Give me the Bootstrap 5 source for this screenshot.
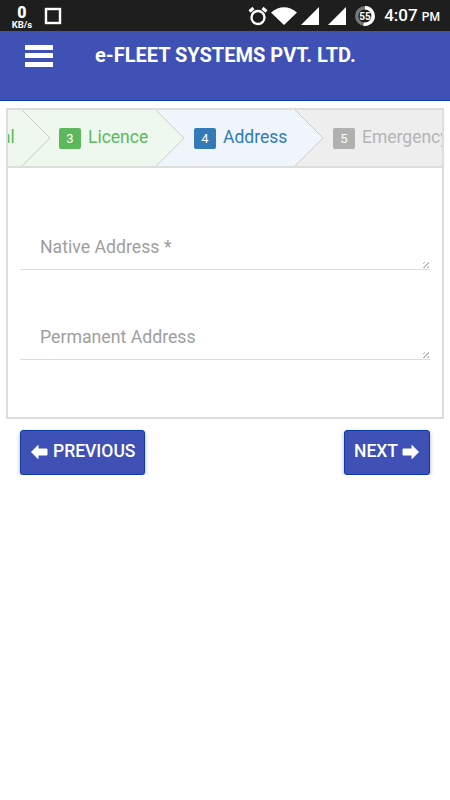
<!DOCTYPE html>
<html lang="en">
<head>
    <meta charset="UTF-8">
    <meta name="viewport" content="width=device-width, initial-scale=1.0">
    <title>e-FLEET SYSTEMS PVT. LTD.</title>
    <link href="https://cdn.jsdelivr.net/npm/bootstrap@5.3.0/dist/css/bootstrap.min.css" rel="stylesheet">
    <style>
        body { font-family: Roboto, "Liberation Sans", sans-serif; background: #fff; }
        svg { display: block; flex: none; }

        /* status bar */
        .status-bar { height: 31px; background: #1e1e1e; color: #fff; padding-left: 11px; padding-right: 10px; }
        .speed { width: 22px; text-align: center; font-weight: 700; margin-top: 2px; }
        .speed b { display: block; font-size: 16px; line-height: 15px; }
        .speed span { display: block; font-size: 9.500px; line-height: 9px; white-space: nowrap; }
        .clock { font-size: 17px; font-weight: 500; margin-left: 9px; white-space: nowrap; }
        .clock small { font-size: 12px; font-weight: 500; }

        /* header */
        .app-bar { height: 70px; background: #3f51b5; border-bottom: 1px solid #0d3aa9; padding: 14px 0 0 25px; align-items: flex-start; justify-content: flex-start; flex-wrap: nowrap; }
        .menu-btn { background: none; border: 0; padding: 0; width: 28px; }
        .menu-btn i { display: block; height: 5px; background: #fff; margin-bottom: 3px; }
        .menu-btn i:nth-child(2) { margin-bottom: 4px; }
        .app-title { color: #fff; font-size: 20px; font-weight: 700; margin-left: 42px; line-height: 21px; margin-top: 0; padding: 0; white-space: nowrap; }

        /* wizard */
        .wizard-box { margin: 7px 6px 0 6px; border: 2px solid #ddd; border-radius: 0; height: 311px; }
        .step-strip { height: 58px; border-bottom: 2px solid #ddd; overflow: hidden; flex-wrap: nowrap; }
        .step-item { position: relative; flex: none; height: 56px; font-size: 17.500px; padding-left: 38px; padding-bottom: 2px; white-space: nowrap; }
        .step-item svg { position: absolute; left: 100%; top: 0; z-index: 1; }
        .step-num { width: 22px; height: 21px; margin-right: 7px; margin-top: 2px; border-radius: 2px; color: #fff; font-size: 13px; line-height: 21px; text-align: center; }
        .step-past { width: 14px; padding-left: 0; background: #eff8ef; color: #5cb85c; }
        .step-past span { margin-left: -7px; }
        .step-done { width: 134px; background: #eff8ef; color: #5cb85c; padding-left: 37px; }
        .step-done .step-num { background: #5cb85c; }
        .step-active { width: 139px; background: #f0f5fc; color: #337ab7; }
        .step-active .step-num { background: #337ab7; }
        .step-todo { width: 160px; background: #eee; color: #b4b4b4; }
        .step-todo .step-num { background: #b0b0b0; }

        .field-area { padding: 56px 12px 0 12px; }
        .address-input { height: 46px; border: 0; border-bottom: 1px solid #ddd; border-radius: 0; padding: 12px 20px 0 20px; font-size: 17.700px; font-weight: 400; line-height: 22px; margin-bottom: 44px; box-shadow: none; }
        .address-input::placeholder { color: #9e9e9e; opacity: 1; }
        .address-input::-webkit-resizer {
            background: repeating-linear-gradient(135deg, transparent 0 1px, #bbb 1px 2px, transparent 2px 3px) right 1px bottom 1px / 6px 6px no-repeat;
        }

        /* buttons */
        .nav-buttons { padding: 11px 20px 0 20px; }
        .btn-fleet { height: 45px; background: #3f51b5; border: 1px solid #0d3aa9; border-radius: 3px; color: #fff; font-size: 17.500px; font-weight: 500; padding: 0 9px 2px 9px; box-shadow: 0 2px 4px rgba(0,0,0,.3); gap: 5px; }
        .btn-next { gap: 4px; }
        .btn-fleet:hover { background: #3f51b5; color: #fff; }
    </style>
</head>
<body>
    <!-- Status bar -->
    <div class="status-bar d-flex align-items-center">
        <div class="speed"><b>0</b><span>KB/s</span></div>
        <svg style="margin-left:11px" width="18" height="18" viewBox="0 0 18 18"><rect x="2" y="2" width="14" height="14" fill="none" stroke="#fff" stroke-width="2.4"/></svg>
        <svg class="ms-auto" width="20" height="20" viewBox="0 0 20 20">
            <circle cx="10" cy="11.500" r="6.500" fill="none" stroke="#fff" stroke-width="2.4"/>
            <path d="M1.500 5.500 5.500 2M18.500 5.500 14.500 2" stroke="#fff" stroke-width="3" fill="none"/>
        </svg>
        <svg style="margin-left:3px" width="26" height="18" viewBox="0 0 26 18"><path d="M0 5.500Q13-5 26 5.500L13 18Z" fill="#fff"/></svg>
        <svg style="margin-left:4px" width="18" height="18" viewBox="0 0 18 18"><path d="M18 0V18H0Z" fill="#fff"/></svg>
        <svg style="margin-left:9px" width="18" height="18" viewBox="0 0 18 18"><path d="M18 0V18H0Z" fill="#fff"/></svg>
        <svg style="margin-left:9px" width="20" height="20" viewBox="0 0 20 20">
            <circle cx="10" cy="10" r="8.300" fill="none" stroke="#777" stroke-width="3.400"/>
            <path d="M10 1.700A8.300 8.300 0 1 1 8.600 18.200" fill="none" stroke="#fff" stroke-width="3.400"/>
            <text x="10" y="13.500" text-anchor="middle" font-size="10" font-weight="700" fill="#fff" font-family="Roboto, sans-serif">55</text>
        </svg>
        <div class="clock">4:07 <small>PM</small></div>
    </div>

    <!-- Header -->
    <nav class="navbar app-bar">
        <button class="menu-btn" type="button" aria-label="Menu"><i></i><i></i><i></i></button>
        <span class="navbar-brand app-title">e-FLEET SYSTEMS PVT. LTD.</span>
    </nav>

    <!-- Wizard -->
    <div class="card wizard-box">
        <div class="step-strip d-flex">
            <div class="step-item step-past d-flex align-items-center">
                <span>al</span>
                <svg width="30" height="56" viewBox="0 0 30 56"><path d="M0 0 28 28 0 56Z" fill="#eff8ef"/><path d="M0 0 28 28 0 56" fill="none" stroke="#ccc"/></svg>
            </div>
            <div class="step-item step-done d-flex align-items-center">
                <span class="step-num">3</span>Licence
                <svg width="30" height="56" viewBox="0 0 30 56"><path d="M0 0 28 28 0 56Z" fill="#eff8ef"/><path d="M0 0 28 28 0 56" fill="none" stroke="#ccc"/></svg>
            </div>
            <div class="step-item step-active d-flex align-items-center">
                <span class="step-num">4</span>Address
                <svg width="30" height="56" viewBox="0 0 30 56"><path d="M0 0 28 28 0 56Z" fill="#f0f5fc"/><path d="M0 0 28 28 0 56" fill="none" stroke="#ccc"/></svg>
            </div>
            <div class="step-item step-todo d-flex align-items-center">
                <span class="step-num">5</span>Emergency
            </div>
        </div>
        <div class="field-area">
            <textarea class="form-control address-input" placeholder="Native Address *"></textarea>
            <textarea class="form-control address-input" placeholder="Permanent Address"></textarea>
        </div>
    </div>

    <!-- Previous / next -->
    <div class="nav-buttons d-flex justify-content-between">
        <button class="btn btn-fleet d-flex align-items-center" type="button">
            <svg width="18" height="16" viewBox="0 0 18 16"><path d="M1.500 8 8 1.500V5H17V11H8V14.500Z" fill="#fff" stroke="#fff" stroke-linejoin="round"/></svg>
            PREVIOUS
        </button>
        <button class="btn btn-fleet btn-next d-flex align-items-center" type="button">
            NEXT
            <svg width="18" height="16" viewBox="0 0 18 16"><path d="M16.500 8 10 1.500V5H1V11H10V14.500Z" fill="#fff" stroke="#fff" stroke-linejoin="round"/></svg>
        </button>
    </div>

    <script src="https://cdn.jsdelivr.net/npm/bootstrap@5.3.0/dist/js/bootstrap.bundle.min.js"></script>
</body>
</html>
